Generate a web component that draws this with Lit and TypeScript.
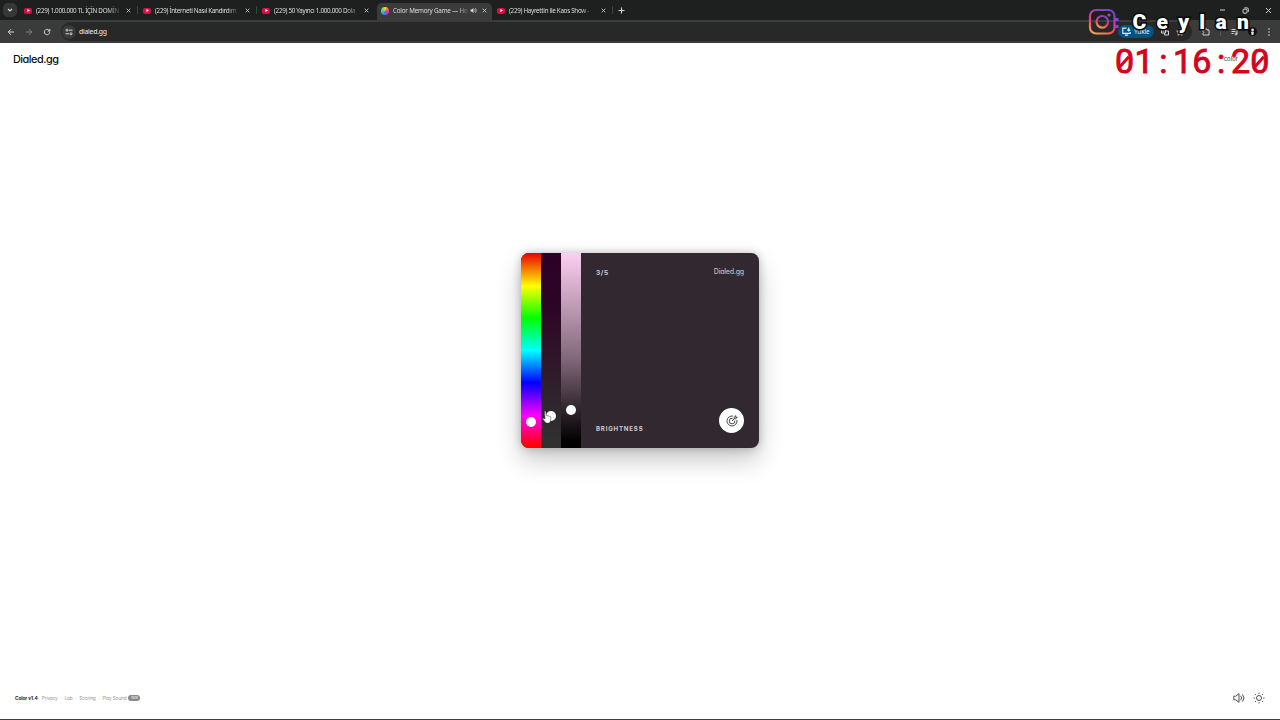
import { LitElement, html, css } from "lit";
import { customElement } from "lit/decorators.js";
import { classMap } from "lit/directives/class-map.js";

interface Tab {
  title: string;
  width: number;
  active?: boolean;
  divider?: boolean;
}

const TABS: Tab[] = [
  { title: "(229) 1.000.000 TL İÇİN DOMİN", width: 119, divider: true },
  { title: "(229) İnterneti Nasıl Kandırdım", width: 119, divider: true },
  { title: "(229) 50 Yayıncı 1.000.000 Dola", width: 119 },
  { title: "Color Memory Game — Ho", width: 115, active: true },
  { title: "(229) Hayrettin ile Kaos Show -", width: 121, divider: true },
];

const cross = html`<svg class="x" viewBox="0 0 6 6"><path d="M.8.8 5.2 5.2M5.2.8.8 5.2" /></svg>`;

@customElement("browser-bar")
export class BrowserBar extends LitElement {
  static styles = css`
    :host { display: block; font-family: "Noto Sans", sans-serif; color: #dedede; }
    svg { display: block; fill: none; stroke: #d4d4d4; stroke-width: 1; flex: none; }
    .strip { height: 20px; background: #1e201f; display: flex; align-items: stretch; padding-left: 3px; }
    .menu { width: 14px; height: 14px; border-radius: 5px; background: #363837; margin: 3px 2px 0 0; display: grid; place-items: center; }
    .menu svg { width: 6px; height: 6px; }
    .tab { box-sizing: border-box; display: flex; align-items: center; padding: 1px 7px 0 5px; position: relative; }
    .tab.active { background: #3b3b3b; margin-top: 3px; padding: 0 5px 2px 4px; border-radius: 5px 5px 0 0; margin-left: 1px; }
    .tab.divider::after { content: ""; position: absolute; right: 0; top: 6px; width: 1px; height: 8px; background: #3f4140; }
    .fav { width: 8px; height: 6px; border-radius: 2px; background: #e30a45; display: grid; place-items: center; margin-right: 4px; flex: none; }
    .fav svg { width: 3px; height: 3px; fill: #fff; stroke: none; }
    .wheel { width: 8px; height: 8px; border-radius: 50%; margin-right: 4px; flex: none;
      background: conic-gradient(#f7d83c, #ff6a3d, #f0308e, #8b4bf0, #3a8cf5, #2ad0b0, #6be04a, #f7d83c); }
    .title { width: 83px; font-size: 6.3px; line-height: 10px; letter-spacing: -0.3px; white-space: nowrap; flex: none;
      mask-image: linear-gradient(90deg, #000 86%, rgba(0,0,0,.2)); }
    .active .title { width: 75px; letter-spacing: -0.22px; }
    .divider:last-of-type .title { letter-spacing: -0.22px; }
    .x { width: 5px; height: 5px; margin-left: auto; }
    .speaker { width: 7px; height: 7px; margin-left: 2px; }
    .plus { width: 7px; height: 7px; margin: 7px 0 0 5px; }
    .window { margin: 7px 8px 0 auto; display: flex; gap: 16px; }
    .window svg { width: 7px; height: 7px; }
    .toolbar { height: 23px; box-sizing: border-box; background: #3b3b3b; display: flex; align-items: center; padding: 0 9px 0 7px; }
    .nav { width: 8px; height: 8px; margin-right: 10px; }
    .dim { opacity: .45; }
    .omnibox { height: 19px; width: 1131px; border-radius: 10px; background: #282828; display: flex; align-items: center; box-sizing: border-box; padding: 0 8px 0 1px; }
    .site { width: 14px; height: 14px; border-radius: 50%; background: #3a3a3a; display: grid; place-items: center; }
    .site svg { width: 8px; height: 8px; }
    .url { font-size: 6.9px; margin-left: 3px; color: #eee; letter-spacing: -.26px; }
    .install { margin-left: auto; width: 36px; height: 13px; border-radius: 7px; background: #06527c; color: #d8efff; font-size: 6.5px; letter-spacing: -.15px; display: flex; align-items: center; gap: 3px; box-sizing: border-box; padding-left: 4px; }
    .install svg { width: 9px; height: 9px; stroke: #d8efff; }
    .i8 { width: 8px; height: 8px; margin-left: 7px; }
    .right { display: flex; align-items: center; flex: 1; justify-content: space-between; padding-left: 10px; }
    .right svg { width: 8px; height: 8px; }
    .sep { width: 1px; height: 9px; background: #555; }
    .avatar { width: 9px; height: 9px; border-radius: 50%; background: #111; }
    .right .avatar svg { width: 9px; height: 9px; fill: #ddd; stroke: none; }
    .right .dots { width: 4px; fill: #d4d4d4; stroke: none; }
  `;

  private tab(t: Tab) {
    return html`<div class=${classMap({ tab: true, active: !!t.active, divider: !!t.divider })} style="width:${t.width}px">
      ${t.active
        ? html`<span class="wheel"></span>`
        : html`<span class="fav"><svg viewBox="0 0 3 3"><path d="M.4 0 3 1.5.4 3Z" /></svg></span>`}
      <span class="title">${t.title}</span>
      ${t.active
        ? html`<svg class="speaker" viewBox="0 0 7 7"><path fill="#d4d4d4" stroke="none" d="M.5 2.4h1L3.5 1v5L1.5 4.6h-1Z" /><path stroke-width=".7" d="M4.6 2.2q1 1.3 0 2.6M5.5 1.2q1.7 2.3 0 4.6" /></svg>`
        : null}
      ${cross}
    </div>`;
  }

  render() {
    return html`
      <div class="strip">
        <div class="menu"><svg viewBox="0 0 6 6"><path stroke-width="1.2" d="m1 2 2 2 2-2" /></svg></div>
        ${TABS.map((t) => this.tab(t))}
        <svg class="plus" viewBox="0 0 7 7"><path stroke-width="1.1" d="M3.5.5v6M.5 3.5h6" /></svg>
        <div class="window">
          <svg viewBox="0 0 7 7"><path d="M1 3h5" /></svg>
          <svg viewBox="0 0 7 7"><rect x="1" y="2.2" width="4" height="4" rx="1" /><path d="M2.3.9h2.8q1.2 0 1.2 1.2v2.8" /></svg>
          <svg viewBox="0 0 7 7"><path d="m1 1 5 5M6 1 1 6" /></svg>
        </div>
      </div>
      <div class="toolbar">
        <svg class="nav" viewBox="0 0 8 8"><path d="M7 4H1.3M4 1.2 1.2 4 4 6.8" /></svg>
        <svg class="nav dim" viewBox="0 0 8 8"><path d="M1 4h5.7M4 1.2 6.8 4 4 6.8" /></svg>
        <svg class="nav" viewBox="0 0 8 8"><path d="M6.7 4.2A2.7 2.7 0 1 1 5.9 2.1L6.8 3M6.9 1v2.1H4.8" /></svg>
        <div class="omnibox">
          <span class="site"><svg viewBox="0 0 8 8"><circle cx="2" cy="2.2" r="1" /><path d="M4 2.2h3.5M.5 5.8H4" /><circle cx="6" cy="5.8" r="1" /></svg></span>
          <span class="url">dialed.gg</span>
          <span class="install"><svg viewBox="0 0 8 8"><path d="M4 1H.7v4.7h6.6V4.5M2.5 7.2h3M6 .5v3M4.7 2.3 6 3.6l1.3-1.3" /></svg>Yükle</span>
          <svg class="i8" viewBox="0 0 8 8"><path d="M.5 1h4v4h-4ZM4.5 3h3v4h-4V5M1.5 3h2" /></svg>
          <svg class="i8" viewBox="0 0 8 8"><path stroke-width=".9" d="m4 .8 1 2.1 2.3.3-1.7 1.6.4 2.4-2-1.2-2 1.2.4-2.4L.7 3.2 3 2.9Z" /></svg>
        </div>
        <div class="right">
          <svg viewBox="0 0 8 8"><path d="M1 2h2V1h2v1h2v5H1V5.5q1.4-.9 0-2Z" /></svg>
          <span class="sep"></span>
          <svg viewBox="0 0 8 8"><path d="M.5 1.5h4M.5 3.5h4M.5 5.5h2M6 6V1.5h1.5" /><circle cx="5" cy="6" r="1" /></svg>
          <span class="avatar"><svg viewBox="0 0 9 9"><circle cx="4.6" cy="3" r="1.4" /><path d="M3 4.8h3L5.4 8H3.6Z" /></svg></span>
          <svg class="dots" viewBox="0 0 4 8"><circle cx="2" cy="1" r=".8" /><circle cx="2" cy="4" r=".8" /><circle cx="2" cy="7" r=".8" /></svg>
        </div>
      </div>`;
  }
}

@customElement("color-card")
export class ColorCard extends LitElement {
  static styles = css`
    :host { display: flex; width: 238px; height: 195px; border-radius: 8px; background: #31292f; box-shadow: 0 0 8px rgba(0,0,0,.24), 0 12px 24px rgba(0,0,0,.22); }
    .track { width: 20px; position: relative; flex: none; }
    .hue { border-radius: 8px 0 0 8px; background: linear-gradient(#e80000, #ff0 17%, #0f0 33.5%, #0ff 50%, #00f 66.5%, #f0f 83.5%, #f00 99%); }
    .sat { background: linear-gradient(#2c0025, #2d0727 30%, #2f1a2b 60%, #303030 95%); }
    .bri { background: linear-gradient(#fccff0, #7e6778 55%, #33282f 79%, #000 97%); }
    .knob { position: absolute; left: 5px; width: 10px; height: 10px; border-radius: 50%; background: #fff; }
    .hand { position: absolute; left: 1px; top: 157px; width: 10px; height: 15px; }
    .body { flex: 1; display: flex; flex-direction: column; justify-content: space-between; padding: 14px 15px 15px; font-family: Inter, sans-serif; color: #d0c9ce; }
    .row { display: flex; justify-content: space-between; }
    .round { font-size: 6.6px; font-weight: 700; letter-spacing: .55px; line-height: 12px; }
    .brand { font-size: 7px; line-height: 9px; letter-spacing: -.22px; font-weight: 500; font-feature-settings: "cv11"; color: #bfb8bd; }
    .bottom { align-items: flex-end; height: 25px; }
    .label { font-size: 6.1px; font-weight: 700; letter-spacing: .82px; line-height: 8px; }
    .go { width: 25px; height: 25px; border-radius: 50%; background: #fff; display: grid; place-items: center; }
    .go svg { width: 12px; height: 12px; fill: none; stroke: #333; stroke-width: .9; }
  `;

  render() {
    return html`
      <div class="track hue"><span class="knob" style="top:164px"></span></div>
      <div class="track sat">
        <span class="knob" style="top:158px"></span>
        <svg class="hand" viewBox="0 0 10 15"><path fill="#fff" stroke="#333" stroke-width=".5" d="M2.4 1.3q1-.7 1.3.3l.8 4 3.3.7q1.3.3 1.1 1.7l-.5 3.2-1 1.9H4L.9 9.2q-.5-1.2.9-1l1.3.8Z" /></svg>
      </div>
      <div class="track bri"><span class="knob" style="top:152.4px"></span></div>
      <div class="body">
        <div class="row"><span class="round">3/5</span><span class="brand">Dialed.gg</span></div>
        <div class="row bottom">
          <span class="label">BRIGHTNESS</span>
          <span class="go"><svg viewBox="0 0 12 12">
            <path d="M7.1 1.1A5 5 0 1 0 10.9 5M6.6 3.3A2.8 2.8 0 1 0 8.8 5.6M6 6l2.3-2.3M8.2 3.8V2.1L9.7.7v1.6h1.6L9.9 3.8Z" />
          </svg></span>
        </div>
      </div>`;
  }
}

const glyph = (c: string) => html`<span class=${classMap({ digit: true, zero: c === "0" })}>${c}</span>`;

@customElement("app-root")
export class AppRoot extends LitElement {
  static styles = css`
    :host { display: flex; flex-direction: column; width: 1280px; height: 720px; position: relative; overflow: hidden; background: #fff; font-family: Inter, sans-serif; box-sizing: border-box; border-bottom: 1px solid #3c3c3c; }
    header { display: flex; justify-content: space-between; padding: 8px 42px 0 13px; height: 24px; box-sizing: border-box; }
    .brand { font-size: 10.9px; line-height: 17px; letter-spacing: -.5px; color: #111; font-weight: 500; font-feature-settings: "cv11"; }
    .mode { font-size: 6px; line-height: 15px; color: #333; font-feature-settings: "cv11"; }
    main { flex: 1; display: grid; justify-items: center; align-items: start; padding-top: 186px; }
    footer { display: flex; align-items: center; justify-content: space-between; padding: 0 15px 14px; height: 14px; }
    .links { display: flex; align-items: center; font-size: 4.8px; color: #999; white-space: nowrap; font-feature-settings: "cv11"; letter-spacing: -.17px; }
    .links span { flex: none; }
    .links .ver { color: #222; font-weight: 700; width: 20px; letter-spacing: -.1px; }
    .dot { width: 6.8px; text-align: center; }
    .new { width: 12px; height: 6px; border-radius: 3px; background: #888; color: #eee; font-size: 3.8px; line-height: 6px; text-align: center; margin-left: 2px; }
    .tools { display: flex; gap: 8px; }
    .tools svg { width: 12px; height: 12px; fill: none; stroke: #333; stroke-width: .85; }
    .insta { position: absolute; left: 1088px; top: 8px; width: 29px; height: 28px; fill: none; }
    .marks { position: absolute; left: 1115px; top: 17px; width: 4px; height: 12px; }
    .name { position: absolute; left: 1132.5px; top: 9px; display: flex; font: 900 21px/26px Roboto, sans-serif; color: #fff; letter-spacing: 10.3px; -webkit-text-stroke: 3px #090909; paint-order: stroke fill; }
    .timer { position: absolute; left: 1115px; top: 41px; display: flex; font: 400 34px/40px Roboto, sans-serif; color: #d4041b; -webkit-text-stroke: .9px #d4041b; }
    .digit { width: 19.3px; text-align: center; position: relative; }
    .zero::after { content: ""; position: absolute; left: 8.4px; top: 14px; width: 2.8px; height: 13px; background: #d4041b; transform: rotate(42deg); }
  `;

  render() {
    return html`
      <browser-bar></browser-bar>
      <header><span class="brand">Dialed.gg</span><span class="mode">color</span></header>
      <main><color-card></color-card></main>
      <footer>
        <div class="links">
          <span class="ver">Color v1.4</span><span class="dot">·</span><span>Privacy</span><span class="dot">·</span><span>Lab</span><span class="dot">·</span><span>Scoring</span><span class="dot">·</span><span>Play Sound</span><span class="new">new</span>
        </div>
        <div class="tools">
          <svg viewBox="0 0 12 12"><path d="M.8 4.2h2L6 1.6v8.8L2.8 7.8h-2ZM7.8 3.8q1.5 2.2 0 4.4M9.5 2.3q3 3.7 0 7.4" /></svg>
          <svg viewBox="0 0 12 12"><circle cx="6" cy="6" r="2.5" /><path d="M6 .5v1.3M6 10.2v1.3M.5 6h1.3M10.2 6h1.3M2.1 2.1l.9.9M9 9l.9.9M2.1 9.9 3 9M9 3l.9-.9" /></svg>
        </div>
      </footer>
      <svg class="insta" viewBox="0 0 29 28">
        <defs><linearGradient id="ig" x1=".2" y1="1" x2=".7" y2="0">
          <stop offset="0" stop-color="#f5a04a" /><stop offset=".35" stop-color="#ec4868" /><stop offset=".65" stop-color="#c13aa4" /><stop offset="1" stop-color="#6848d8" />
        </linearGradient></defs>
        <g stroke="url(#ig)" stroke-width="2.2">
          <rect x="2" y="2" width="24.5" height="23.5" rx="6" /><circle cx="14.3" cy="13.8" r="5.8" />
        </g>
        <circle cx="21" cy="7" r="1.6" fill="#b440ac" />
      </svg>
      <svg class="marks" viewBox="0 0 4 12"><path fill="#7a48df" d="M0 1h3.5v3H0zM0 8h3.5v3H0z" /></svg>
      <div class="name">Ceylan</div>
      <div class="timer">${[..."01:16:20"].map(glyph)}</div>`;
  }
}
